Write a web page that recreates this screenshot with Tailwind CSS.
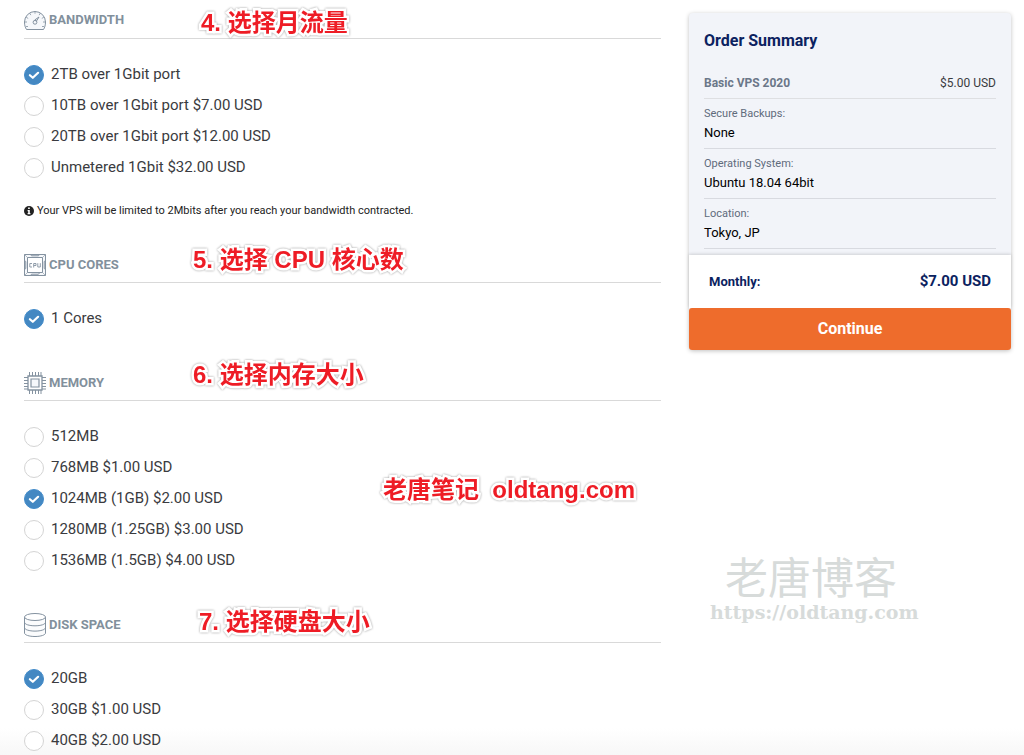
<!DOCTYPE html>
<html lang="en">
<head>
<meta charset="utf-8">
<meta name="viewport" content="width=device-width, initial-scale=1">
<title>Configure VPS</title>
<script src="https://cdn.jsdelivr.net/npm/@tailwindcss/browser@4"></script>
</head>
<body class="bg-white font-[Roboto,'Noto_Sans_CJK_SC',sans-serif] text-[#3a3b40]">
<svg class="hidden" aria-hidden="true">
  <symbol id="tick" viewBox="0 0 20 20"><path d="M5.9 10.200l2.900 2.600 5.300-5" fill="none" stroke="#fff" stroke-width="2.200" stroke-linecap="round" stroke-linejoin="round"/></symbol>
</svg>
<div class="relative min-h-screen bg-[linear-gradient(to_top,#f7f7f7,#ffffff_28px)]">
<div class="grid grid-cols-[minmax(0,1fr)_322px] items-start gap-7 pl-6 pr-[13px]">
  <main class="pt-[9px]">
    <section class="relative">
      <h2 class="flex h-[30px] items-start gap-[3px] border-b border-[#d9d9d9] text-[13px] leading-[22px] font-bold text-[#82909c]">
        <svg class="h-[22px] w-[22px]" viewBox="0 0 22 22" fill="none" stroke="#8492a0" stroke-width="1"><path d="M2.500 20.500h17c1.300-2 2-4.500 2-7.500a10.500 10.500 0 0 0-21 0c0 3 .7 5.500 2 7.500z" fill="#f6f8fb"/><path d="M11 2.500v2.200M5.700 4.200l1.200 1.900M16.300 4.200l-1.200 1.900M2.200 8.300l2 1.100M19.800 8.300l-2 1.100M.5 13h2.500M19 13h2.500M2 17.500h2M18 17.500h2" stroke-width=".8"/><path d="M12.300 12.300l2.700-4.300-4.300 3"/><circle cx="11" cy="13.300" r="1.900"/></svg>
        BANDWIDTH
      </h2>
      <p class="absolute top-0 left-[177px] text-2xl leading-7 font-bold whitespace-nowrap text-[#ee1c25] font-['Liberation_Sans','Noto_Sans_CJK_SC',sans-serif] [-webkit-text-stroke:5px_white] [paint-order:stroke_fill] drop-shadow-[0_0_1px_rgba(0,0,0,0.4)]">4. 选择月流量</p>
      <div class="mt-5">
        <label class="flex h-[31px] items-center gap-[7px] text-[15px]"><span class="relative h-5 w-5"><input type="radio" name="bw" checked class="peer block h-5 w-5 appearance-none rounded-full border border-[#d4d4d4] bg-white checked:border-[#428bca] checked:bg-[#4488c2]"><svg class="pointer-events-none absolute inset-0 hidden h-5 w-5 peer-checked:block"><use href="#tick"/></svg></span>2TB over 1Gbit port</label>
        <label class="flex h-[31px] items-center gap-[7px] text-[15px]"><input type="radio" name="bw" class="h-5 w-5 appearance-none rounded-full border border-[#d4d4d4] bg-white checked:bg-[#4488c2]">10TB over 1Gbit port $7.00 USD</label>
        <label class="flex h-[31px] items-center gap-[7px] text-[15px]"><input type="radio" name="bw" class="h-5 w-5 appearance-none rounded-full border border-[#d4d4d4] bg-white checked:bg-[#4488c2]">20TB over 1Gbit port $12.00 USD</label>
        <label class="flex h-[31px] items-center gap-[7px] text-[15px]"><input type="radio" name="bw" class="h-5 w-5 appearance-none rounded-full border border-[#d4d4d4] bg-white checked:bg-[#4488c2]">Unmetered 1Gbit $32.00 USD</label>
      </div>
      <p class="mt-5 flex items-center gap-[3px] text-[11px] leading-4 text-[#222222]"><svg class="h-[10px] w-[10px]" viewBox="0 0 10 10"><circle cx="5" cy="5" r="5" fill="#222"/><path d="M4.100 1.500h1.700v1.500h-1.700zM3.600 4.100h2.200v3h.6v1.100h-2.800v-1.100h.6v-1.900h-.6z" fill="#fff"/></svg>Your VPS will be limited to 2Mbits after you reach your bandwidth contracted.</p>
    </section>

    <section class="relative mt-[34px]">
      <h2 class="flex h-[30px] items-start gap-[3px] border-b border-[#d9d9d9] text-[13px] leading-6 font-bold text-[#82909c]">
        <svg class="mt-px h-[22px] w-[22px]" viewBox="0 0 22 22" fill="none" stroke="#8492a0" stroke-width="1"><path d="M.5.5h21v21H.5z" fill="#f6f8fb"/><path d="M3.500 3.500h15v15h-15z" fill="#fff"/><path d="M.5.5l3 3M21.500.5l-3 3M.5 21.500l3-3M21.500 21.500l-3-3" stroke-width=".6"/><path d="M6.500.5l1 1.300h7l1-1.300M6.500 21.500l1-1.300h7l1-1.300M.5 6.500l1.300 1v7l-1.300 1M21.500 6.500l-1.300 1v7l1.300 1"/><path d="M8 9.500H5.800v3.500H8M9.700 13.500V9.500h2.300v2H9.700M13.800 9.200v3.800h2.500V9.200" stroke-width=".9"/></svg>
        CPU CORES
      </h2>
      <p class="absolute -top-[7px] left-[169px] text-2xl leading-7 font-bold whitespace-nowrap text-[#ee1c25] font-['Liberation_Sans','Noto_Sans_CJK_SC',sans-serif] [-webkit-text-stroke:5px_white] [paint-order:stroke_fill] drop-shadow-[0_0_1px_rgba(0,0,0,0.4)]">5. 选择 CPU 核心数</p>
      <div class="mt-5">
        <label class="flex h-[31px] items-center gap-[7px] text-[15px]"><span class="relative h-5 w-5"><input type="radio" name="cpu" checked class="peer block h-5 w-5 appearance-none rounded-full border border-[#d4d4d4] bg-white checked:border-[#428bca] checked:bg-[#4488c2]"><svg class="pointer-events-none absolute inset-0 hidden h-5 w-5 peer-checked:block"><use href="#tick"/></svg></span>1 Cores</label>
      </div>
    </section>

    <section class="relative mt-[37px]">
      <h2 class="flex h-[30px] items-start gap-[3px] border-b border-[#d9d9d9] text-[13px] leading-6 font-bold text-[#82909c]">
        <svg class="mt-px h-[22px] w-[22px]" viewBox="0 0 22 22" fill="none" stroke="#8492a0" stroke-width="1"><path d="M5.500 0v4M8.500 0v4M11.500 0v4M14.500 0v4M17 0v4M5.500 18v4M8.500 18v4M11.500 18v4M14.500 18v4M17 18v4M0 5.500h4M0 8.500h4M0 11.500h4M0 14.500h4M0 17h4M18 5.500h4M18 8.500h4M18 11.500h4M18 14.500h4M18 17h4"/><path d="M4 4h14v14H4z" fill="#fff" stroke-width="1.300"/><path d="M7 7h8v8H7z" fill="#f6f8fb" stroke-width="1.200"/></svg>
        MEMORY
      </h2>
      <p class="absolute -top-[10px] left-[169px] text-2xl leading-7 font-bold whitespace-nowrap text-[#ee1c25] font-['Liberation_Sans','Noto_Sans_CJK_SC',sans-serif] [-webkit-text-stroke:5px_white] [paint-order:stroke_fill] drop-shadow-[0_0_1px_rgba(0,0,0,0.4)]">6. 选择内存大小</p>
      <div class="mt-5">
        <label class="flex h-[31px] items-center gap-[7px] text-[15px]"><input type="radio" name="mem" class="h-5 w-5 appearance-none rounded-full border border-[#d4d4d4] bg-white checked:bg-[#4488c2]">512MB</label>
        <label class="flex h-[31px] items-center gap-[7px] text-[15px]"><input type="radio" name="mem" class="h-5 w-5 appearance-none rounded-full border border-[#d4d4d4] bg-white checked:bg-[#4488c2]">768MB $1.00 USD</label>
        <label class="flex h-[31px] items-center gap-[7px] text-[15px]"><span class="relative h-5 w-5"><input type="radio" name="mem" checked class="peer block h-5 w-5 appearance-none rounded-full border border-[#d4d4d4] bg-white checked:border-[#428bca] checked:bg-[#4488c2]"><svg class="pointer-events-none absolute inset-0 hidden h-5 w-5 peer-checked:block"><use href="#tick"/></svg></span>1024MB (1GB) $2.00 USD</label>
        <label class="flex h-[31px] items-center gap-[7px] text-[15px]"><input type="radio" name="mem" class="h-5 w-5 appearance-none rounded-full border border-[#d4d4d4] bg-white checked:bg-[#4488c2]">1280MB (1.25GB) $3.00 USD</label>
        <label class="flex h-[31px] items-center gap-[7px] text-[15px]"><input type="radio" name="mem" class="h-5 w-5 appearance-none rounded-full border border-[#d4d4d4] bg-white checked:bg-[#4488c2]">1536MB (1.5GB) $4.00 USD</label>
      </div>
      <p class="absolute top-[105px] left-[359px] text-2xl leading-7 font-bold whitespace-pre text-[#ee1c25] font-['Liberation_Sans','Noto_Sans_CJK_SC',sans-serif] [-webkit-text-stroke:5px_white] [paint-order:stroke_fill] drop-shadow-[0_0_1px_rgba(0,0,0,0.4)]">老唐笔记  oldtang.com</p>
    </section>

    <section class="relative mt-[37px]">
      <h2 class="flex h-[30px] items-start gap-[3px] border-b border-[#d9d9d9] text-[13px] leading-6 font-bold text-[#82909c]">
        <svg class="h-6 w-[22px]" viewBox="0 0 22 24" fill="none" stroke="#8492a0" stroke-width="1"><path d="M.5 4v16c0 2 4.700 3.500 10.500 3.500s10.500-1.500 10.500-3.500V4" fill="#fbfcfd"/><ellipse cx="11" cy="4" rx="10.500" ry="3.500" fill="#fff"/><path d="M.5 9.300c0 2 4.700 3.500 10.500 3.500s10.500-1.500 10.500-3.500M.5 14.600c0 2 4.700 3.500 10.500 3.500s10.500-1.500 10.500-3.500"/></svg>
        DISK SPACE
      </h2>
      <p class="absolute -top-[5px] left-[175px] text-2xl leading-7 font-bold whitespace-nowrap text-[#ee1c25] font-['Liberation_Sans','Noto_Sans_CJK_SC',sans-serif] [-webkit-text-stroke:5px_white] [paint-order:stroke_fill] drop-shadow-[0_0_1px_rgba(0,0,0,0.4)]">7. 选择硬盘大小</p>
      <div class="mt-5">
        <label class="flex h-[31px] items-center gap-[7px] text-[15px]"><span class="relative h-5 w-5"><input type="radio" name="disk" checked class="peer block h-5 w-5 appearance-none rounded-full border border-[#d4d4d4] bg-white checked:border-[#428bca] checked:bg-[#4488c2]"><svg class="pointer-events-none absolute inset-0 hidden h-5 w-5 peer-checked:block"><use href="#tick"/></svg></span>20GB</label>
        <label class="flex h-[31px] items-center gap-[7px] text-[15px]"><input type="radio" name="disk" class="h-5 w-5 appearance-none rounded-full border border-[#d4d4d4] bg-white checked:bg-[#4488c2]">30GB $1.00 USD</label>
        <label class="flex h-[31px] items-center gap-[7px] text-[15px]"><input type="radio" name="disk" class="h-5 w-5 appearance-none rounded-full border border-[#d4d4d4] bg-white checked:bg-[#4488c2]">40GB $2.00 USD</label>
      </div>
    </section>
  </main>

  <aside class="mt-[13px] rounded bg-[#f2f4f9] shadow-[0_1px_4px_rgba(0,0,0,0.25)]">
    <div class="px-[15px] pt-4 pb-[6px]">
      <h2 class="text-base leading-6 font-bold text-[#0b2260]">Order Summary</h2>
      <div class="mt-5 flex items-center justify-between border-b border-[#dedfe2] pb-[5px] text-xs leading-5"><strong class="font-bold text-[#6b7788]">Basic VPS 2020</strong><span>$5.00 USD</span></div>
      <dl class="text-black">
        <div class="border-b border-[#d8dae0] pt-[6px] pb-[5px]"><dt class="text-[11px] leading-[18px] text-[#5f6b7c]">Secure Backups:</dt><dd class="text-[13px] leading-5">None</dd></div>
        <div class="border-b border-[#d8dae0] pt-[6px] pb-[5px]"><dt class="text-[11px] leading-[18px] text-[#5f6b7c]">Operating System:</dt><dd class="text-[13px] leading-5">Ubuntu 18.04 64bit</dd></div>
        <div class="border-b border-[#d8dae0] pt-[6px] pb-[5px]"><dt class="text-[11px] leading-[18px] text-[#5f6b7c]">Location:</dt><dd class="text-[13px] leading-5">Tokyo, JP</dd></div>
      </dl>
    </div>
    <div class="flex h-[53px] items-center justify-between bg-white px-5 text-[#0b2260] shadow-[0_-1px_3px_rgba(0,0,0,0.15)]"><span class="text-[13px] font-bold">Monthly:</span><span class="text-[15px] font-bold">$7.00 USD</span></div>
    <button type="button" class="block h-[42px] w-full rounded-[3px] bg-[#ee6c2c] text-base font-bold text-white">Continue</button>
  </aside>
</div>
<div class="absolute top-[555px] left-[710px] text-[#d7dbda]">
  <p class="pl-[15px] text-[43px] leading-[48px] font-normal whitespace-nowrap font-['Liberation_Sans','Noto_Sans_CJK_SC',sans-serif]">老唐博客</p>
  <p class="text-[19px] leading-[18px] font-bold whitespace-nowrap font-['DejaVu_Serif',serif]">https://oldtang.com</p>
</div>
</div>
</body>
</html>
